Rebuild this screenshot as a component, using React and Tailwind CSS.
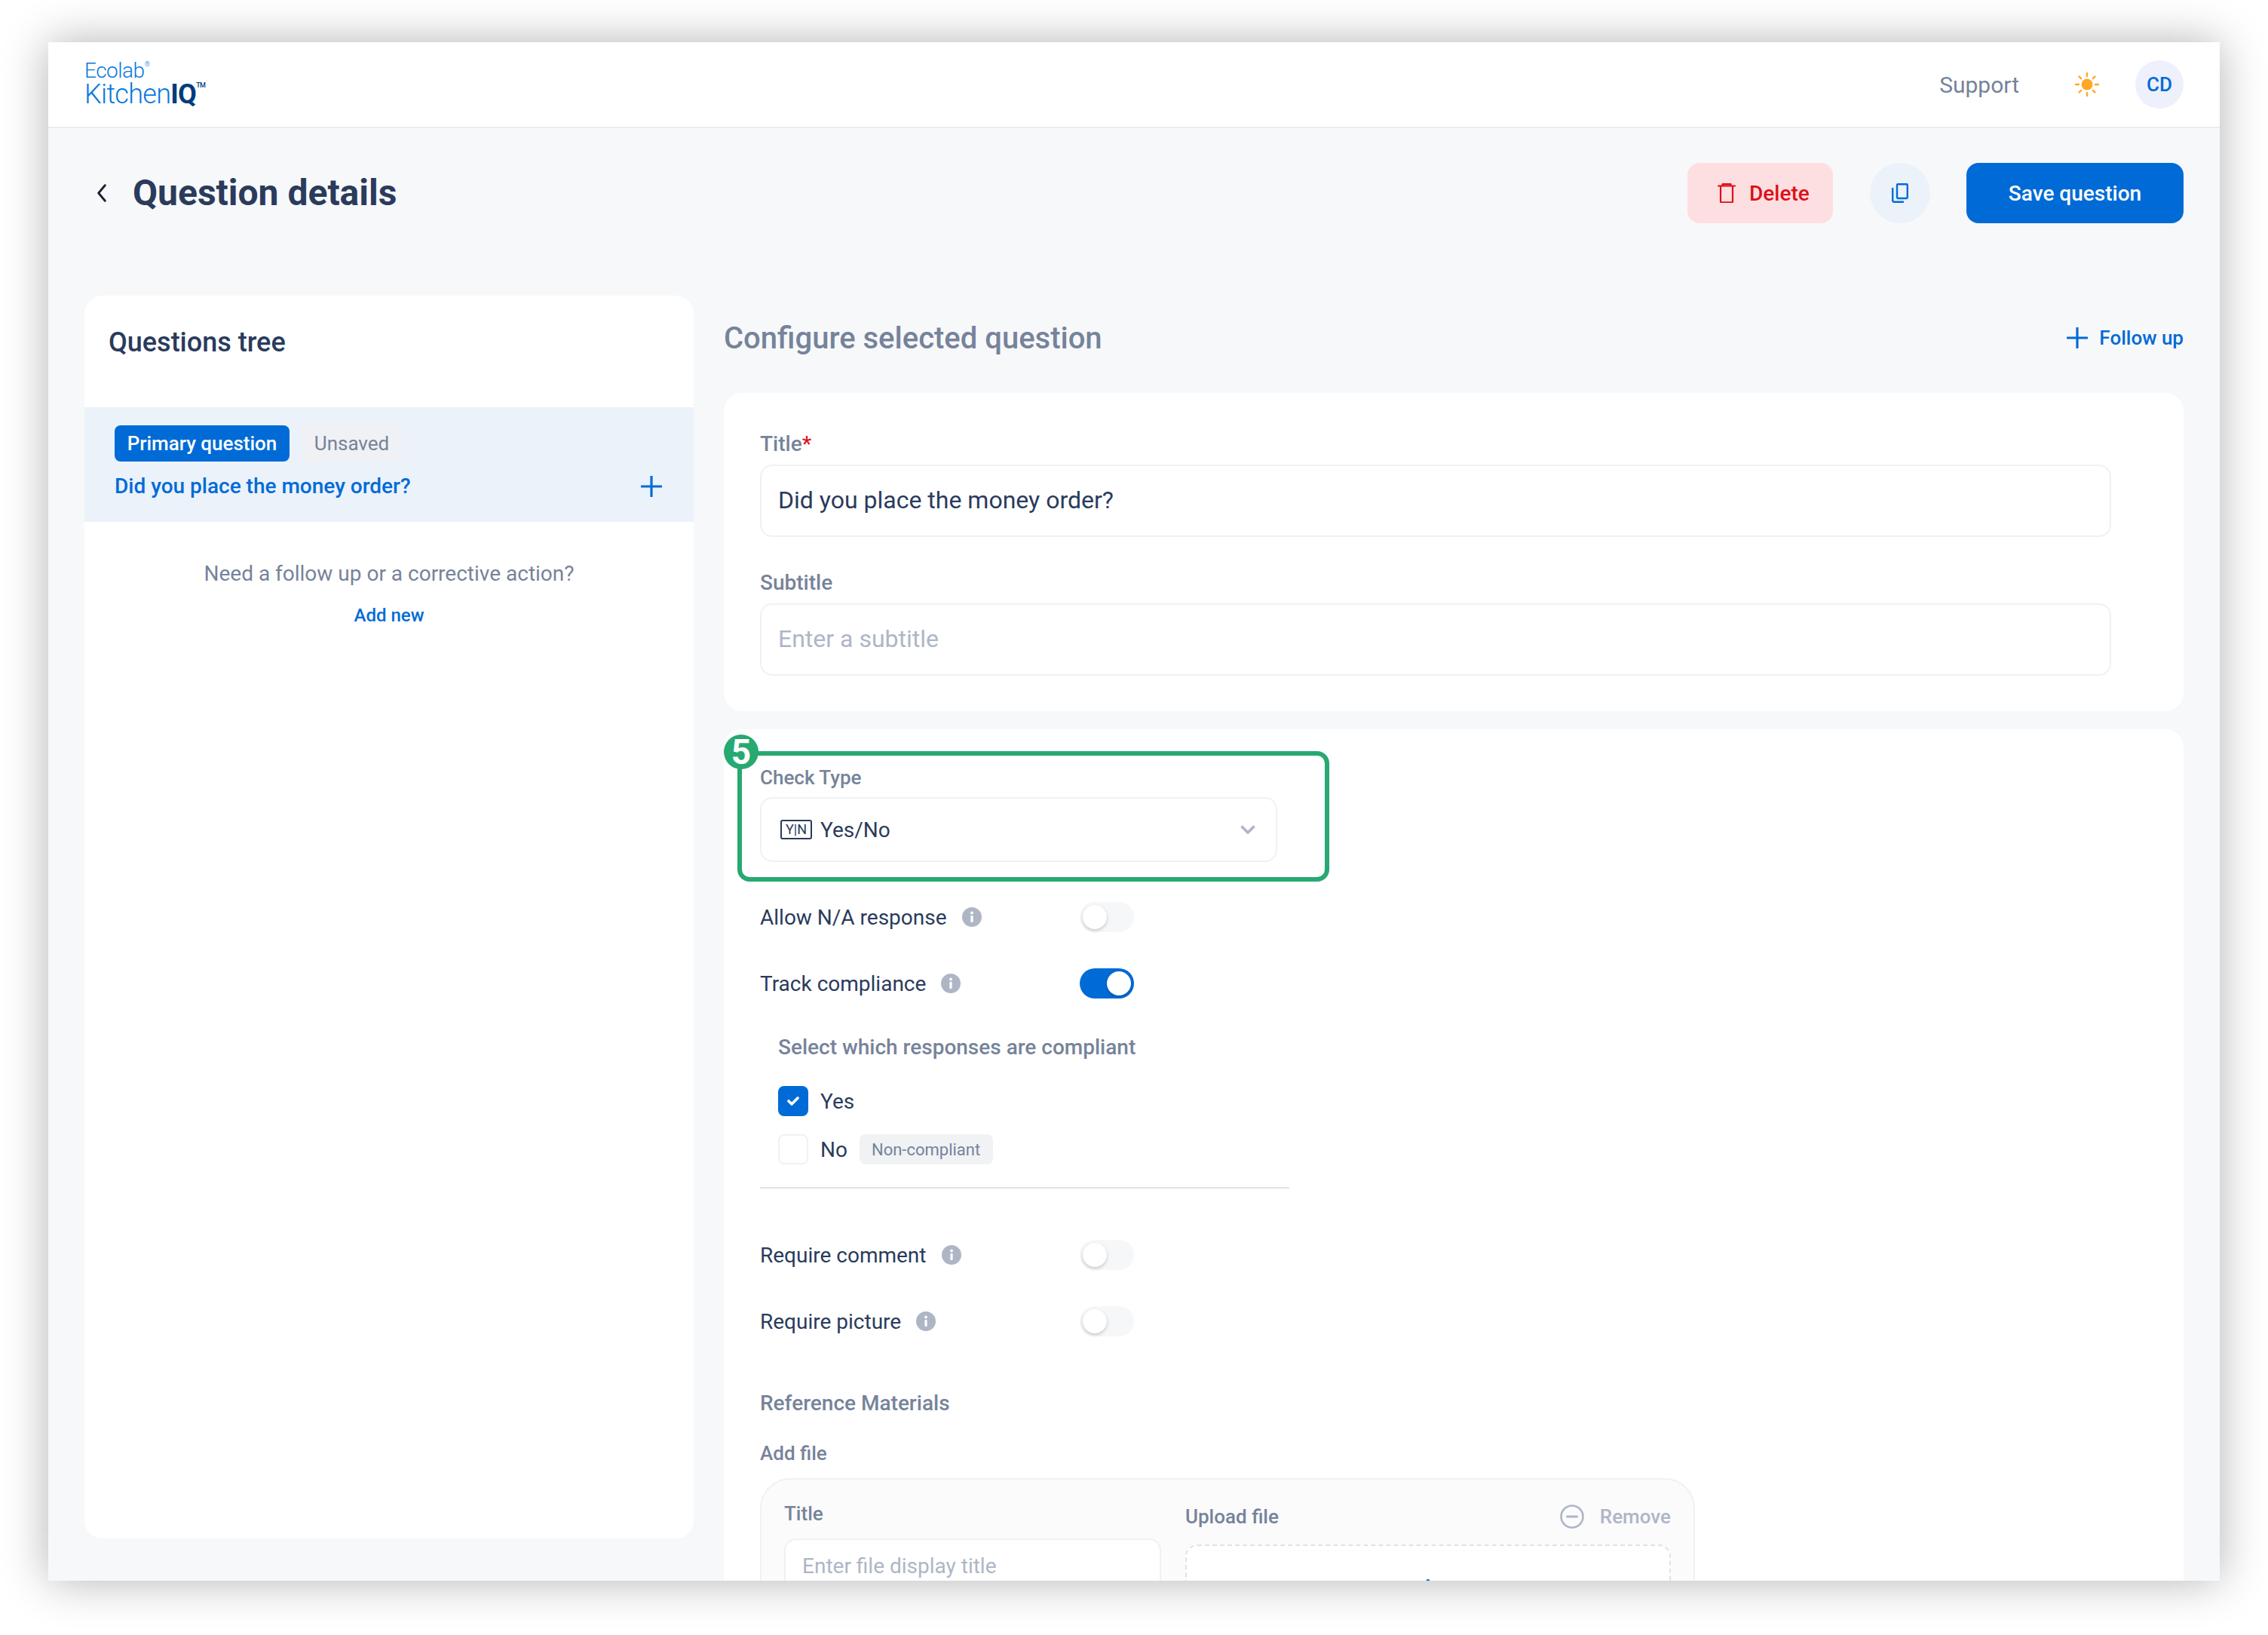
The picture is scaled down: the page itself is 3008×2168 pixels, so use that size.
import React from "react";

const Info = () => (
  <svg viewBox="0 0 26 26" className="w-[26px] h-[26px] shrink-0">
    <circle cx="13" cy="13" r="13" fill="#aeb6c6" />
    <circle cx="13" cy="7.5" r="1.9" fill="#fff" />
    <rect x="11.4" y="11" width="3.2" height="9" rx="1" fill="#fff" />
  </svg>
);

const Toggle = ({ on }) => (
  <div className={`w-[72px] h-[40px] rounded-full flex items-center px-[4px] ${on ? "bg-[#006bd6] justify-end" : "bg-[#f6f7f9] justify-start"}`}>
    <div className="w-[32px] h-[32px] rounded-full bg-white shadow-[0_2px_4px_rgba(0,0,0,0.2)]"></div>
  </div>
);

const ToggleRow = ({ label, on, className }) => (
  <div className={`flex items-center h-[40px] ${className || ""}`}>
    <div className="w-[424px] flex items-center gap-[20px] text-[28px] text-[#2a3b5c]">
      <span className="pt-[1px]">{label}</span>
      <Info />
    </div>
    <Toggle on={on} />
  </div>
);

const Plus = ({ size }) => (
  <svg viewBox="0 0 28 28" style={{ width: size, height: size }} fill="none" stroke="#006bd6" strokeWidth="3.2" strokeLinecap="round">
    <path d="M14 1v26M1 14h26" />
  </svg>
);

const TextField = ({ value, placeholder }) => (
  <div className={`h-[96px] rounded-[16px] border-2 border-[#f0f1f3] bg-white px-[22px] pb-[2px] flex items-center text-[32px] ${placeholder ? "text-[#aeb6c6]" : "text-[#2a3b5c]"}`}>
    {value || placeholder}
  </div>
);

export default function App() {
  return (
    <div className="w-[3008px] h-[2168px] bg-white pt-[56px] pl-[64px] overflow-hidden font-[family-name:Roboto,sans-serif]">
      <div className="w-[2880px] h-[2040px] bg-[#f7f8fa] shadow-[0_0_56px_rgba(0,0,0,0.3)] overflow-hidden flex flex-col">
        {/* top bar */}
        <header className="h-[114px] shrink-0 bg-white border-b-2 border-[#ebecf2] px-[48px] flex items-center justify-between">
          <div className="text-[#0a78dc] font-light leading-none -mt-[2px]">
            <div className="text-[28px] leading-[28px] tracking-[-0.5px] relative w-fit">
              Ecolab
              <span className="absolute text-[9px] leading-none left-full top-[1px]">®</span>
            </div>
            <div className="text-[36px] leading-[34px] tracking-[-0.7px] relative w-fit">
              Kitchen<span className="font-bold text-[#003b7d]">IQ</span>
              <span className="absolute text-[9px] leading-none left-full top-[1px] font-medium text-[#003b7d]">TM</span>
            </div>
          </div>
          <div className="flex items-center">
            <span className="text-[30px] text-[#76839a]">Support</span>
            <svg viewBox="0 0 32 32" className="w-[32px] h-[32px] ml-[74px]" fill="none" stroke="#ffa726" strokeWidth="2.4" strokeLinecap="round">
              <circle cx="16" cy="16" r="7.5" fill="#ffa726" stroke="none" />
              <path d="M16 1v4M16 27v4M1 16h4M27 16h4M5.5 5.5l2.6 2.6M23.9 23.9l2.6 2.6M5.5 26.5l2.6-2.6M23.9 8.1l2.6-2.6" />
            </svg>
            <div className="w-[64px] h-[64px] ml-[48px] rounded-full bg-[#eef0fc] flex items-center justify-center text-[26px] font-medium text-[#006bd6]">CD</div>
          </div>
        </header>

        <main className="flex-1 min-h-0 px-[48px]">
          {/* title row */}
          <div className="flex justify-between pt-[46px] h-[222px] items-start">
            <div className="flex items-center h-[80px]">
              <svg viewBox="0 0 16 28" className="w-[14px] h-[24px] ml-[16px] mr-[34px]" fill="none" stroke="#1d2433" strokeWidth="3.4" strokeLinecap="round" strokeLinejoin="round">
                <path d="M13 2L3 14l10 12" />
              </svg>
              <h1 className="text-[48px] font-bold text-[#2a3b5c]">Question details</h1>
            </div>
            <div className="flex items-center h-[80px]">
              <button className="w-[193px] h-[80px] rounded-[16px] bg-[#fddfe1] flex items-center pl-[40px] gap-[18px] text-[28px] font-medium text-[#dc1018]">
                <svg viewBox="0 0 24 26" className="w-[24px] h-[26px]" fill="none" stroke="#dc1018" strokeWidth="2.2" strokeLinecap="round" strokeLinejoin="round">
                  <path d="M1 3.5h22M6.5 3.5V1.2h11v2.3M4 3.5v21a.8.8 0 0 0 .8.8h14.4a.8.8 0 0 0 .8-.8v-21" />
                </svg>
                <span className="pt-[1px]">Delete</span>
              </button>
              <button className="w-[80px] h-[80px] ml-[49px] rounded-full bg-[#ebf2fa] flex items-center justify-center">
                <svg viewBox="0 0 22 26" className="w-[22px] h-[26px]" fill="none" stroke="#006bd6" strokeWidth="2.4" strokeLinecap="round" strokeLinejoin="round">
                  <rect x="7" y="1.2" width="13.8" height="18.8" rx="1.2" />
                  <path d="M1.2 7v16a1.8 1.8 0 0 0 1.8 1.8h12" />
                </svg>
              </button>
              <button className="w-[288px] h-[80px] ml-[48px] pt-[1px] rounded-[16px] bg-[#006bd6] text-[28px] font-medium text-white">Save question</button>
            </div>
          </div>

          <div className="flex gap-[40px] items-start">
            {/* questions tree */}
            <aside className="w-[808px] h-[1648px] shrink-0 bg-white rounded-[24px] overflow-hidden">
              <div className="h-[148px] px-[32px] pt-[39px] text-[36px] leading-[46px] font-medium text-[#2a3b5c]">Questions tree</div>
              <div className="h-[152px] bg-[#ebf2fa] pl-[40px] pr-[42px] pt-[24px]">
                <div className="flex gap-[16px] items-center">
                  <span className="w-[232px] h-[48px] rounded-[8px] bg-[#006bd6] flex items-center justify-center text-[26px] font-medium text-white">Primary question</span>
                  <span className="w-[133px] h-[48px] rounded-[8px] bg-[#eff1f4] flex items-center justify-center text-[26px] text-[#76839a]">Unsaved</span>
                </div>
                <div className="flex items-center justify-between mt-[12px]">
                  <span className="text-[28px] font-medium text-[#006bd6]">Did you place the money order?</span>
                  <Plus size={28} />
                </div>
              </div>
              <p className="mt-[51px] text-center text-[28px] leading-[36px] text-[#76839a]">Need a follow up or a corrective action?</p>
              <p className="mt-[19px] text-center text-[24px] leading-[36px] font-medium text-[#006bd6]">Add new</p>
            </aside>

            {/* configure column */}
            <section className="w-[1936px] shrink-0">
              <div className="h-[114px] mb-[15px] flex items-center justify-between">
                <h2 className="text-[40px] font-medium text-[#76839a]">Configure selected question</h2>
                <div className="flex items-center gap-[15px] text-[26px] font-medium text-[#006bd6] -mt-[2px]">
                  <Plus size={28} />
                  Follow up
                </div>
              </div>

              <div className="bg-white rounded-[24px] px-[48px] pt-[49px] h-[422px] mb-[24px]">
                <div className="pr-[48px]">
                  <label className="block text-[28px] leading-[38px] font-medium text-[#76839a] mb-[8px]">
                    Title<span className="text-[#e0111f]">*</span>
                  </label>
                  <TextField value="Did you place the money order?" />
                  <label className="block mt-[42px] text-[28px] leading-[38px] font-medium text-[#76839a] mb-[8px]">Subtitle</label>
                  <TextField placeholder="Enter a subtitle" />
                </div>
              </div>

              <div className="relative bg-white rounded-[24px] px-[48px] pt-[45px] h-[1300px]">
                {/* step annotation */}
                <div className="absolute left-[18px] top-[29px] w-[785px] h-[173px] rounded-[16px] border-[6px] border-[#27a971]"></div>
                <div className="absolute left-[0px] top-[7px] w-[46px] h-[46px] rounded-full bg-[#27a971] flex items-center justify-center text-[46px] font-bold leading-none text-white">5</div>

                <div className="text-[26px] leading-[38px] font-medium text-[#76839a]">Check Type</div>
                <div className="mt-[7px] w-[686px] h-[86px] rounded-[16px] border-2 border-[#f0f1f3] pl-[25px] pr-[27px] flex items-center text-[28px] text-[#2a3b5c]">
                  <div className="w-[42px] h-[26px] rounded-[3px] border-2 border-[#2a3b5c] flex items-center justify-center text-[18px] leading-none">Y|N</div>
                  <span className="ml-[11px] pt-[1px]">Yes/No</span>
                  <svg viewBox="0 0 20 12" className="w-[20px] h-[12px] ml-auto" fill="none" stroke="#aeb6c6" strokeWidth="3.6" strokeLinejoin="round">
                    <path d="M1.5 1.5L10 10l8.5-8.5" />
                  </svg>
                </div>

                <ToggleRow label="Allow N/A response" className="mt-[53px]" />
                <ToggleRow label="Track compliance" on className="mt-[48px]" />

                <div className="w-[702px] pl-[24px] pb-[30px] border-b-2 border-[#dfe2e8]">
                  <div className="mt-[47px] text-[28px] leading-[36px] font-medium text-[#76839a]">Select which responses are compliant</div>
                  <div className="mt-[33px] flex items-center gap-[16px] h-[40px] text-[28px] text-[#2a3b5c]">
                    <div className="w-[40px] h-[40px] rounded-[8px] bg-[#006bd6] flex items-center justify-center">
                      <svg viewBox="0 0 16 12" className="w-[16px] h-[12px]" fill="none" stroke="#fff" strokeWidth="3.6" strokeLinecap="round" strokeLinejoin="round">
                        <path d="M2 6l4 4 8-8" />
                      </svg>
                    </div>
                    <span className="pt-[1px]">Yes</span>
                  </div>
                  <div className="mt-[24px] flex items-center gap-[16px] h-[40px] text-[28px] text-[#2a3b5c]">
                    <div className="w-[40px] h-[40px] rounded-[8px] bg-white border-2 border-[#f0f1f3]"></div>
                    <span className="pt-[1px]">No</span>
                    <span className="h-[40px] pl-[16px] pr-[17px] pt-[1px] rounded-[8px] bg-[#f0f2f4] flex items-center text-[22px] text-[#76839a]">Non-compliant</span>
                  </div>
                </div>

                <ToggleRow label="Require comment" className="mt-[68px]" />
                <ToggleRow label="Require picture" className="mt-[48px]" />

                <div className="mt-[71px] text-[28px] leading-[36px] font-medium text-[#76839a]">Reference Materials</div>
                <div className="mt-[31px] text-[26px] leading-[34px] font-medium text-[#76839a]">Add file</div>

                <div className="mt-[16px] w-[1240px] h-[400px] rounded-[40px] border-2 border-[#f0f1f3] bg-[#fbfbfc] px-[30px] pt-[28px] flex gap-[32px]">
                  <div className="w-[500px] shrink-0">
                    <div className="text-[26px] leading-[34px] font-medium text-[#76839a]">Title</div>
                    <div className="mt-[16px] h-[72px] rounded-[16px] border-2 border-[#f0f1f3] bg-white px-[22px] pt-[1px] flex items-center text-[28px] text-[#aeb6c6]">Enter file display title</div>
                  </div>
                  <div className="flex-1">
                    <div className="h-[42px] flex items-center text-[26px] font-medium text-[#76839a]">
                      Upload file
                      <svg viewBox="0 0 32 32" className="w-[32px] h-[32px] ml-auto" fill="none" stroke="#aeb6c6" strokeWidth="2.6" strokeLinecap="round">
                        <circle cx="16" cy="16" r="14.5" />
                        <path d="M9.5 16h13" strokeWidth="3" />
                      </svg>
                      <span className="ml-[21px] text-[#aeb6c6]">Remove</span>
                    </div>
                    <div className="mt-[16px] h-[200px] rounded-[16px] border-2 border-dashed border-[#dfe2e8] bg-white flex justify-center pt-[44px]">
                      <svg viewBox="0 0 32 32" className="w-[32px] h-[32px]" fill="none" stroke="#006bd6" strokeWidth="2.6" strokeLinecap="round" strokeLinejoin="round">
                        <path d="M16 1v20M8 9l8-8 8 8M3 23v6h26v-6" />
                      </svg>
                    </div>
                  </div>
                </div>
              </div>
            </section>
          </div>
        </main>
      </div>
    </div>
  );
}
